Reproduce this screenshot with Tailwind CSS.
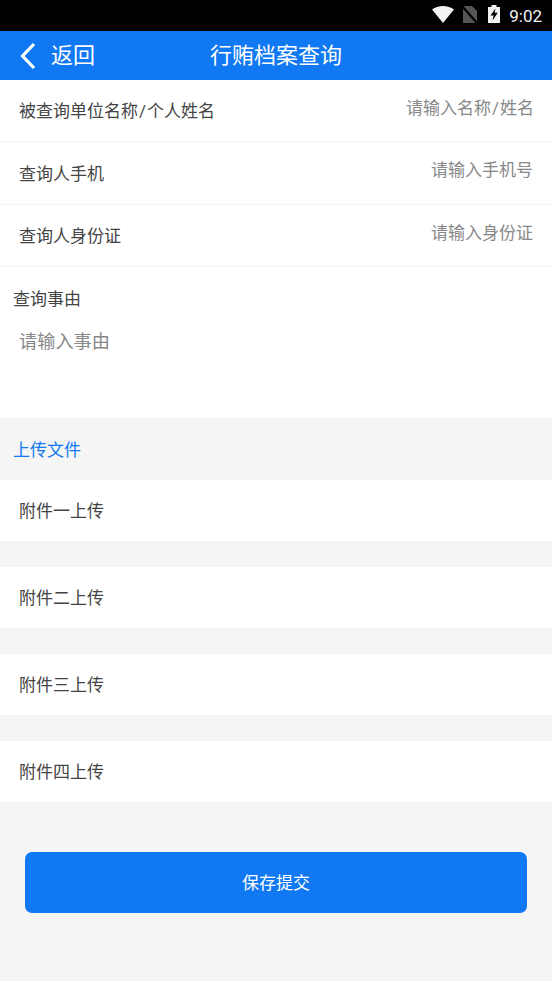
<!DOCTYPE html>
<html lang="zh-CN">

<head>
    <meta charset="UTF-8" />
    <meta name="viewport" content="width=device-width, initial-scale=1.0" />
    <title>行贿档案查询</title>
    <script src="https://cdn.jsdelivr.net/npm/@tailwindcss/browser@4"></script>
</head>

<body class="bg-[#f5f5f5] font-['Roboto','Noto_Sans_CJK_SC',sans-serif]">
    <div class="w-[552px] h-[981px] overflow-hidden flex flex-col">
        <!-- status bar -->
        <div class="h-[31px] shrink-0 bg-black flex items-start justify-end text-[#f2f2f2]">
            <svg class="w-[22px] h-[17px] mt-[6px] mr-[9px]" viewBox="0 0 22 17">
                <path d="M0 3.500C3 1.200 6.800 0 11 0S19 1.200 22 3.500L11 17z" fill="#f2f2f2" />
            </svg>
            <svg class="w-[14px] h-[17px] mt-[6px] mr-[11px]" viewBox="0 0 14 17">
                <path d="M0 0h9l5 5v12H0z" fill="#555" />
                <path d="M-1 0L14 17" stroke="#000" stroke-width="2.200" />
            </svg>
            <svg class="w-[12px] h-[18px] mt-[5px] mr-[9px]" viewBox="0 0 12 18">
                <path d="M3.500 0h5v2H12v16H0V2h3.500z" fill="#f2f2f2" />
                <path d="M7.500 3.500L2.500 10.500h3L4.500 15.500 9.800 7.800H6.600z" fill="#000" />
            </svg>
            <span class="mt-[7px] mr-[10px] text-[17px] leading-[18px]">9:02</span>
        </div>

        <!-- header -->
        <div class="relative h-[49px] shrink-0 bg-[#0f78f2] flex items-center text-white">
            <svg class="ml-[19px] w-[18px] h-[28px]" viewBox="0 0 18 28" fill="none">
                <path d="M15 2L3.500 14 15 26" stroke="#fff" stroke-width="3.200" />
            </svg>
            <span class="ml-[14px] text-[22px] leading-none">返回</span>
            <span class="absolute left-[210px] text-[22px] leading-none">行贿档案查询</span>
        </div>

        <!-- form -->
        <div class="bg-white shrink-0">
            <div class="h-[62px] border-b border-[#f5f5f5] flex justify-between pl-[19px] pr-[18px]">
                <span class="mt-[20px] text-[17px] leading-[22px] text-[#444]">被查询单位名称<span class="mx-[1px]">/</span>个人姓名</span>
                <span class="mt-[17px] text-[17px] leading-[22px] text-[#888]">请输入名称<span class="mx-[1px]">/</span>姓名</span>
            </div>
            <div class="h-[63px] border-b border-[#f5f5f5] flex justify-between pl-[19px] pr-[19px]">
                <span class="mt-[21px] text-[17px] leading-[22px] text-[#444]">查询人手机</span>
                <span class="mt-[17px] text-[17px] leading-[22px] text-[#888]">请输入手机号</span>
            </div>
            <div class="h-[62px] border-b border-[#f5f5f5] flex justify-between pl-[19px] pr-[19px]">
                <span class="mt-[20px] text-[17px] leading-[22px] text-[#444]">查询人身份证</span>
                <span class="mt-[17px] text-[17px] leading-[22px] text-[#888]">请输入身份证</span>
            </div>
            <div class="h-[151px] pl-[13px] pt-[21px]">
                <div class="text-[17px] leading-[22px] text-[#444]">查询事由</div>
                <div class="mt-[21px] ml-[6px] text-[18.200px] leading-[22px] text-[#888]">请输入事由</div>
            </div>
        </div>

        <div class="h-[61.500px] shrink-0 flex items-center pl-[13px] pt-[3px] text-[17px] text-[#0f78f2]">上传文件</div>

        <!-- attachments -->
        <div class="flex flex-col gap-[25.500px] shrink-0">
            <div class="h-[61.500px] bg-white flex items-center pl-[19px] pt-[3px] text-[17px] text-[#444]">附件一上传</div>
            <div class="h-[61.500px] bg-white flex items-center pl-[19px] pt-[3px] text-[17px] text-[#444]">附件二上传</div>
            <div class="h-[61.500px] bg-white flex items-center pl-[19px] pt-[3px] text-[17px] text-[#444]">附件三上传</div>
            <div class="h-[61.500px] bg-white flex items-center pl-[19px] pt-[3px] text-[17px] text-[#444]">附件四上传</div>
        </div>

        <button class="mt-[49.500px] mx-[25px] h-[61.500px] shrink-0 pt-[3px] rounded-[7px] bg-[#0f78f2] text-white text-[17px]">保存提交</button>
    </div>
</body>

</html>
